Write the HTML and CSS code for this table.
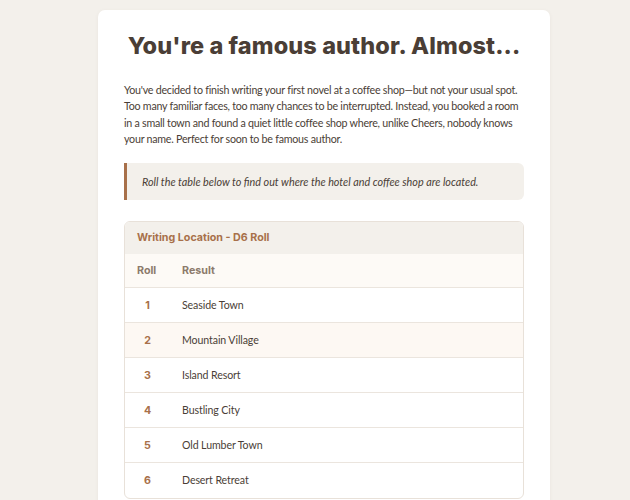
FILE: index.html
```html
<!DOCTYPE html>
<html lang="en">
<head>
<meta charset="utf-8">
<title>You're a famous author. Almost...</title>
<link rel="stylesheet" href="styles.css">
</head>
<body>
<main class="card">
  <h1 class="title">You're a famous author. Almost...</h1>
  <p class="intro">You've decided to finish writing your first novel at a coffee shop—but not your usual spot. Too many familiar faces, too many chances to be interrupted. Instead, you booked a room in a small town and found a quiet little coffee shop where, unlike Cheers, nobody knows your name. Perfect for soon to be famous author.</p>
  <div class="callout">Roll the table below to find out where the hotel and coffee shop are located.</div>
  <section class="roll-table">
    <div class="table-title">Writing Location - D6 Roll</div>
    <table>
      <thead>
        <tr><th class="col-roll">Roll</th><th>Result</th></tr>
      </thead>
      <tbody>
        <tr><td class="num">1</td><td>Seaside Town</td></tr>
        <tr><td class="num">2</td><td>Mountain Village</td></tr>
        <tr><td class="num">3</td><td>Island Resort</td></tr>
        <tr><td class="num">4</td><td>Bustling City</td></tr>
        <tr><td class="num">5</td><td>Old Lumber Town</td></tr>
        <tr><td class="num">6</td><td>Desert Retreat</td></tr>
      </tbody>
    </table>
  </section>
</main>
</body>
</html>
```

FILE: styles.css
```css
* { box-sizing: border-box; }
html, body { margin: 0; padding: 0; }
body {
  background: #f3f0eb;
  font-family: Lato, "Open Sans", sans-serif;
  color: #4a3e36;
  padding: 10px 0 0 98px;
}
.card {
  width: 452px;
  background: #ffffff;
  border-radius: 7px;
  padding: 20px 26px 40px;
  box-shadow: 0 1px 4px rgba(90, 70, 50, 0.06);
}
.title {
  font-family: Inter, "DejaVu Sans", sans-serif;
  font-weight: 800;
  font-size: 23.5px;
  letter-spacing: 0.1px;
  line-height: 32px;
  text-align: center;
  margin: 0 0 20px;
  color: #4a3e36;
}
.intro {
  font-size: 10.7px;
  letter-spacing: -0.25px;
  line-height: 16.4px;
  margin: 0 0 15px;
}
.callout {
  background: #f3f0eb;
  border-left: 3px solid #a8704a;
  border-radius: 0 6px 6px 0;
  padding: 0 15px;
  height: 37px;
  display: flex;
  align-items: center;
  font-style: italic;
  font-size: 10.8px;
  margin-bottom: 21px;
}
.roll-table {
  border: 1px solid #e8e1d9;
  border-radius: 6px;
  overflow: hidden;
}
.table-title {
  background: #f3f0eb;
  color: #a8704a;
  font-family: Inter, "DejaVu Sans", sans-serif;
  font-weight: 700;
  font-size: 10.7px;
  height: 32px;
  line-height: 32px;
  padding: 0 12px;
}
table {
  width: 100%;
  border-collapse: collapse;
}
th {
  background: #fdfaf6;
  color: #8c7a6c;
  font-family: Inter, "DejaVu Sans", sans-serif;
  font-weight: 700;
  font-size: 10.7px;
  text-align: left;
  height: 34px;
  padding: 0 12px;
}
.col-roll { width: 45px; }
td {
  height: 35px;
  padding: 0 12px;
  font-size: 10.6px;
  letter-spacing: -0.1px;
  border-top: 1px solid #ebe5de;
}
tbody tr:nth-child(2) td { background: #fdf8f3; }
td.num {
  text-align: center;
  color: #a8704a;
  font-family: Inter, "DejaVu Sans", sans-serif;
  font-weight: 700;
  font-size: 10.7px;
  letter-spacing: 0;
}
```
